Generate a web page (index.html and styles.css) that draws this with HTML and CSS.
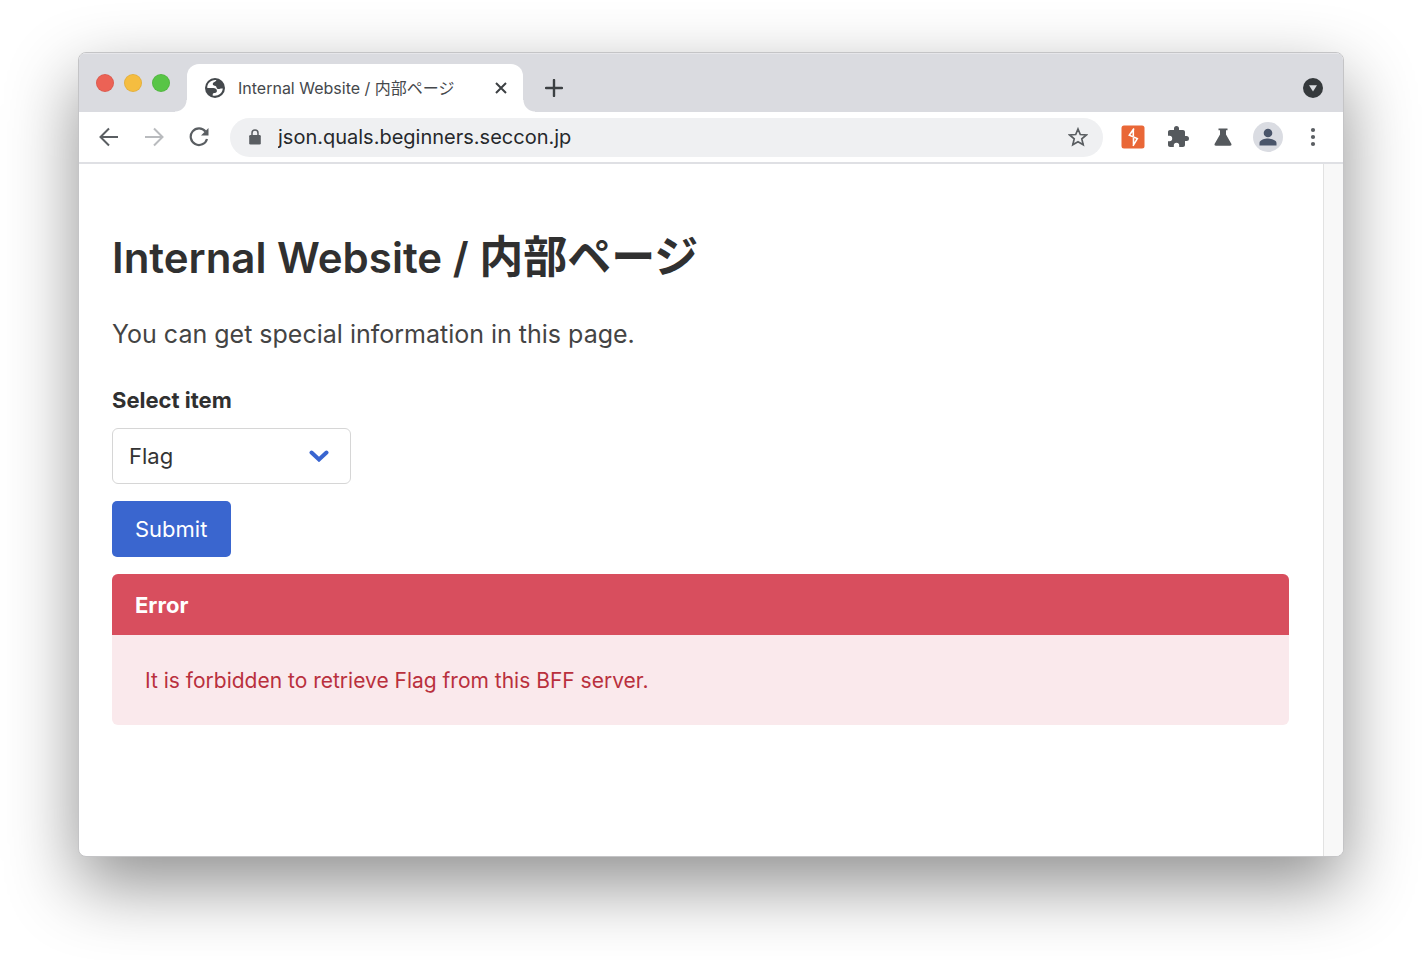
FILE: index.html
```html
<!DOCTYPE html>
<html lang="ja">
<head>
<meta charset="utf-8">
<title>Internal Website / 内部ページ</title>
<link rel="stylesheet" href="styles.css">
</head>
<body>
<div class="window">
  <header class="tabstrip">
    <div class="lights">
      <button class="light light-close" aria-label="Close window"></button>
      <button class="light light-min" aria-label="Minimise"></button>
      <button class="light light-zoom" aria-label="Zoom"></button>
    </div>
    <div class="tab">
      <svg class="icon-20" viewBox="0 0 20 20"><circle cx="10" cy="10" r="10" fill="#45494d"/><path d="M11.500 2.200C10.500 4 8.300 3.800 7.800 5.600c-.3 1.500.7 2 2 2.100 1.400.1 1.600 1 1.800 2 .3 1.300 1.500 1.400 2.800 1.200 1.300-.2 2-.4 3.400-.3-.4 4.300-3.900 7.300-8.200 7.200-.8 0-1.400-.2-2-.4l.2-1.500c.2-.9 1-1 2-1 1.500-.1 2.200-1 2.100-2.200-.1-1.900-1.600-2.700-3.500-2.700H2.300C2 5.500 6 1.500 11.500 2.200z" fill="#fff"/></svg>
      <span class="tab-title">Internal Website / 内部ページ</span>
      <button class="plain tab-close" aria-label="Close tab"><svg class="icon-12" viewBox="0 0 12 12"><path d="M1 1l10 10M11 1L1 11" stroke="#3c4043" stroke-width="2"/></svg></button>
    </div>
    <button class="plain new-tab" aria-label="New tab"><svg class="icon-18" viewBox="0 0 18 18"><path d="M9 1v16M1 9h16" stroke="#3c4043" stroke-width="2.400" stroke-linecap="round"/></svg></button>
    <button class="plain tab-search" aria-label="Search tabs"><svg class="icon-20" viewBox="0 0 20 20"><circle cx="10" cy="10" r="10" fill="#35393c"/><path d="M6 7.200h8l-4 6.300z" fill="#dadce0"/></svg></button>
  </header>
  <nav class="toolbar">
    <button class="plain" aria-label="Back"><svg class="icon-20" viewBox="0 0 20 20"><path d="M19 10H2M10 1.500L1.500 10l8.500 8.500" fill="none" stroke="#5a5e62" stroke-width="2"/></svg></button>
    <button class="plain" aria-label="Forward"><svg class="icon-20" viewBox="0 0 20 20"><path d="M1 10h17M10 1.500l8.500 8.500-8.500 8.500" fill="none" stroke="#b9bbbe" stroke-width="2"/></svg></button>
    <button class="plain" aria-label="Reload"><svg class="icon-20" viewBox="0 0 20 20"><path d="M16.500 4.500A8.300 8.300 0 1 0 18 12" fill="none" stroke="#5a5e62" stroke-width="2.200"/><path d="M19.500 1v7.500H12z" fill="#5a5e62"/></svg></button>
    <div class="omnibox">
      <svg class="icon-16" viewBox="0 0 16 16"><rect x="2.200" y="6" width="11.600" height="9.500" rx="1.300" fill="#5a5e62"/><path d="M5 7V4a3 3 0 0 1 6 0v3" fill="none" stroke="#5a5e62" stroke-width="1.500"/></svg>
      <input class="url" type="text" value="json.quals.beginners.seccon.jp" aria-label="Address">
      <button class="plain" aria-label="Bookmark"><svg class="icon-20" viewBox="0 0 20 20"><path d="M10 2l2.300 5.500 6 .5-4.500 3.900 1.400 5.900L10 14.700l-5.200 3.100 1.400-5.900L1.700 8l6-.5z" fill="none" stroke="#5a5e62" stroke-width="1.700"/></svg></button>
    </div>
    <div class="extensions">
      <button class="plain" aria-label="Burp"><svg class="icon-24" viewBox="0 0 24 24"><rect x=".5" y=".5" width="23" height="23" rx="2.500" fill="#e96737"/><path d="M13 3.500L8.300 10.200l8 3.400L12 20.800M12.300 4v7M12.500 19.500V13" fill="none" stroke="#fff" stroke-width="1.600"/></svg></button>
      <button class="plain" aria-label="Extensions"><svg class="icon-24" viewBox="0 0 24 24"><path d="M20.500 11H19V7c0-1.100-.9-2-2-2h-4V3.500a2.500 2.500 0 0 0-5 0V5H4c-1.100 0-2 .9-2 2v3.800h1.500a2.700 2.700 0 0 1 0 5.400H2V20c0 1.100.9 2 2 2h3.800v-1.500a2.700 2.700 0 0 1 5.400 0V22H17c1.100 0 2-.9 2-2v-4h1.500a2.500 2.500 0 0 0 0-5z" fill="#55595d"/></svg></button>
      <button class="plain" aria-label="Labs"><svg class="icon-24" viewBox="0 0 24 24"><path d="M7.500 3.500h9v1.800H15v4.200l5.300 9.300c.6 1-.1 2-1.200 2H4.900c-1.100 0-1.800-1-1.200-2L9 9.500V5.300H7.500z" fill="#55595d"/></svg></button>
      <button class="plain" aria-label="Profile"><svg class="icon-30" viewBox="0 0 30 30"><circle cx="15" cy="15" r="15" fill="#dadce2"/><circle cx="15" cy="11" r="4.300" fill="#4a556a"/><path d="M6.500 23.500V21c0-3 5.500-4.400 8.500-4.400s8.500 1.400 8.500 4.400v2.500z" fill="#4a556a"/></svg></button>
      <button class="plain" aria-label="Menu"><svg class="icon-20" viewBox="0 0 20 20"><g fill="#5a5e62"><circle cx="10" cy="3" r="2.100"/><circle cx="10" cy="10" r="2.100"/><circle cx="10" cy="17" r="2.100"/></g></svg></button>
    </div>
  </nav>
  <div class="viewport">
    <main class="page">
      <h1 class="title">Internal Website / <span class="title-ja">内部ページ</span></h1>
      <p class="subtitle">You can get special information in this page.</p>
      <form class="form">
        <label class="label" for="item">Select item</label>
        <div class="select-wrap">
          <select class="select" id="item"><option>Flag</option></select>
          <svg class="chevron" viewBox="0 0 20 12"><path d="M2.500 2.500L10 9.500l7.500-7" fill="none" stroke="#3965d0" stroke-width="4" stroke-linecap="round"/></svg>
        </div>
        <button class="submit" type="button">Submit</button>
      </form>
      <article class="message">
        <div class="message-header">Error</div>
        <div class="message-body">It is forbidden to retrieve Flag from this BFF server.</div>
      </article>
    </main>
    <div class="scroll-track"></div>
  </div>
</div>
</body>
</html>
```
FILE: styles.css
```css
* { box-sizing: border-box; }
body {
  margin: 0;
  min-height: 100vh;
  display: flex;
  padding: 52px 78px 103px;
  background: #fff;
  color: #333;
  font: 22px/32px Inter, "Noto Sans CJK JP", sans-serif;
}
button, input, select { font: inherit; color: inherit; }
svg { display: block; flex: none; }
.icon-12 { width: 12px; height: 12px; }
.icon-16 { width: 16px; height: 16px; }
.icon-18 { width: 18px; height: 18px; }
.icon-20 { width: 20px; height: 20px; }
.icon-24 { width: 24px; height: 24px; }
.icon-30 { width: 30px; height: 30px; }
.plain { padding: 0; border: 0; background: none; }
.window {
  flex: 1;
  min-width: 0;
  display: flex;
  flex-direction: column;
  border: 1px solid #c4c4c6;
  border-radius: 8px;
  overflow: hidden;
  background: #fff;
  box-shadow: 0 28px 70px rgba(0, 0, 0, .44);
}
.tabstrip {
  height: 59px;
  display: flex;
  align-items: flex-end;
  padding: 0 20px 0 17px;
  background: #dadbe0;
  border-top: 1px solid #e6e6ea;
}
.lights { display: flex; gap: 10px; height: 59px; align-items: center; }
.light { width: 18px; height: 18px; padding: 0; border: 1px solid #0001; border-radius: 50%; }
.light-close { background: #ec6255; }
.light-min { background: #f5bd40; }
.light-zoom { background: #58c546; }
.tab {
  position: relative;
  width: 336px;
  height: 48px;
  margin-left: 17px;
  padding: 0 16px 0 18px;
  display: flex;
  align-items: center;
  border-radius: 12px 12px 0 0;
  background: #fff;
}
.tab::before, .tab::after {
  content: "";
  position: absolute;
  bottom: 0;
  width: 12px;
  height: 12px;
}
.tab::before { left: -12px; background: radial-gradient(circle at 0 0, #dadbe0 11px, #fff 12px); }
.tab::after { right: -12px; background: radial-gradient(circle at 100% 0, #dadbe0 11px, #fff 12px); }
.tab-title { margin-left: 13px; font-size: 16px; white-space: nowrap; color: #45484c; }
.tab-close { margin-left: auto; }
.new-tab { margin-left: 22px; height: 48px; }
.tab-search { margin-left: auto; height: 48px; }
.toolbar {
  height: 52px;
  display: flex;
  align-items: center;
  gap: 25px;
  padding: 0 8px 0 20px;
  border-bottom: 2px solid #dfe0e4;
}
.omnibox {
  flex: 1;
  min-width: 0;
  height: 39px;
  margin-left: -4px;
  margin-right: -18px;
  padding: 0 15px 0 17px;
  display: flex;
  align-items: center;
  border-radius: 20px;
  background: #eff0f2;
}
.url { flex: 1; min-width: 0; margin-left: 15px; padding: 0; border: 0; background: none; font-size: 20px; color: #26282b; }
.extensions { display: grid; grid-template-columns: repeat(5, 45px); place-items: center; }
.viewport { flex: 1; display: flex; }
.page { flex: 1; min-width: 0; padding: 66px 34px 34px 33px; }
.scroll-track { width: 20px; background: #f8f8f8; border-left: 1px solid #e2e2e2; }
.title { margin: 0; font-size: 42px; line-height: 56px; font-weight: 600; color: #303030; }
.title-ja { font-size: 44px; line-height: 1; }
.subtitle { margin: 30px 0 0; font-size: 25px; line-height: 36px; color: #444; }
.form { margin-top: 32px; display: flex; flex-direction: column; align-items: flex-start; }
.label { font-weight: 700; color: #303030; }
.select-wrap { position: relative; margin-top: 12px; }
.select {
  width: 239px;
  height: 56px;
  padding: 0 16px;
  appearance: none;
  border: 1px solid #d6d6d6;
  border-radius: 6px;
  background: #fff;
}
.chevron { position: absolute; right: 22px; top: 22px; width: 20px; height: 12px; pointer-events: none; }
.submit {
  height: 56px;
  margin-top: 17px;
  padding: 0 24px 0 23px;
  border: 0;
  border-radius: 5px;
  background: #3a66cf;
  color: #fff;
}
.message { margin-top: 17px; border-radius: 6px; overflow: hidden; background: #fae9ec; }
.message-header { padding: 15px 23px 14px; background: #d84e5e; color: #fff; font-weight: 700; }
.message-body { padding: 30px 33px 28px; font-size: 21px; color: #b9303d; }
```
